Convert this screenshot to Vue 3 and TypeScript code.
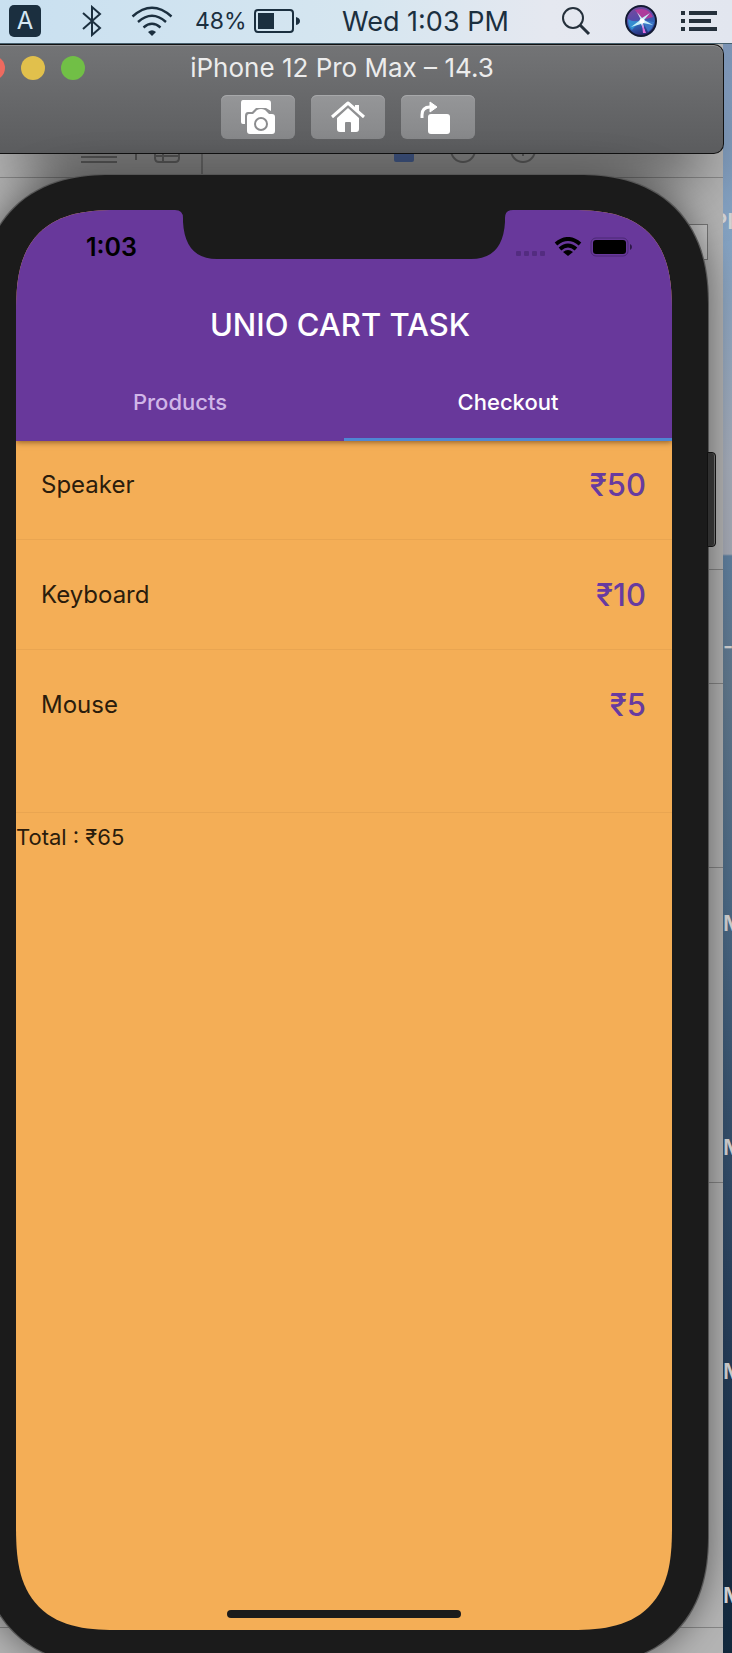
<script setup lang="ts">
import { ref } from 'vue'

interface CartItem {
  name: string
  price: number
}

const items: CartItem[] = [
  { name: 'Speaker', price: 50 },
  { name: 'Keyboard', price: 10 },
  { name: 'Mouse', price: 5 },
]
const total = items.reduce((sum, item) => sum + item.price, 0)
const tabs = ['Products', 'Checkout']
const active = ref('Checkout')
</script>

<template>
  <div class="desktop">
    <header class="menubar">
      <span class="input-source">A</span>
      <svg class="bluetooth" viewBox="0 0 20 32" width="20" height="32" aria-label="Bluetooth">
        <path d="M1 8 L18 23 L10 30 V2 L18 9 L1 24" fill="none" stroke="#1b2f3f" stroke-width="2" />
      </svg>
      <svg class="wifi" viewBox="0 0 42 30" width="42" height="30" aria-label="Wi-Fi">
        <g fill="none" stroke="#1b2f3f" stroke-width="2.4">
          <path d="M1.500 10.500 Q21 -7 40.500 10.500" />
          <path d="M7 16 Q21 3.500 35 16" />
          <path d="M12.500 21.500 Q21 14 29.500 21.500" />
        </g>
        <path d="M17 26 Q21 22.500 25 26 L21 30 Z" fill="#1b2f3f" />
      </svg>
      <span class="percent">48%</span>
      <svg class="battery" viewBox="0 0 46 24" width="46" height="24" aria-label="Battery">
        <rect x="1" y="1" width="38" height="22" rx="3" fill="none" stroke="#1b2f3f" stroke-width="2" />
        <rect x="4" y="4" width="16" height="16" fill="#1b2f3f" />
        <path d="M42 8 Q46 9 46 12 Q46 15 42 16 Z" fill="#1b2f3f" />
      </svg>
      <time class="clock">Wed 1:03 PM</time>
      <svg class="search" viewBox="0 0 30 30" width="30" height="30" aria-label="Search">
        <circle cx="12" cy="12" r="10" fill="none" stroke="#25303b" stroke-width="2" />
        <path d="M19 19 L28 28" stroke="#25303b" stroke-width="3" />
      </svg>
      <svg class="siri" viewBox="0 0 32 32" width="32" height="32" aria-label="Siri">
        <defs>
          <linearGradient id="orb" x1="0.2" y1="0" x2="0.5" y2="1">
            <stop offset="0" stop-color="#7a4b9c" />
            <stop offset="0.4" stop-color="#5a4aa8" />
            <stop offset="0.65" stop-color="#2f62b4" />
            <stop offset="1" stop-color="#2a2470" />
          </linearGradient>
        </defs>
        <circle cx="16" cy="16" r="15" fill="url(#orb)" stroke="#131a33" stroke-width="2" />
        <path d="M10 5 Q23 1 28 12 L17 15 Z" fill="#c0379a" opacity="0.8" />
        <path d="M3 14 Q9 18 16 15 L7 25 Q3 21 3 14Z" fill="#2f9ad8" opacity="0.8" />
        <path d="M17 15 L29 17 Q28 24 23 27 Z" fill="#3f7fd0" opacity="0.8" />
        <path d="M16 15 L12 7 L17 13 L25 8 L19 15 L28 20 L18 18 L20 28 L16 19 L6 22 L14 16 Z" fill="#c5eff8" />
        <path d="M17 18 L21 28 L18 28 Z" fill="#e06fe0" />
        <circle cx="17" cy="16" r="2.5" fill="#fff" />
      </svg>
      <svg class="list" viewBox="0 0 36 20" width="36" height="20" aria-label="Notification Center">
        <path d="M0 0h4v4H0z M8 0h28v4H8z M0 8h4v4H0z M8 8h22v4H8z M0 16h4v4H0z M8 16h28v4H8z" fill="#25303b" />
      </svg>
    </header>

    <main class="stage">
      <div class="wallpaper">
        <span class="file pr">PI</span>
        <span class="file dash">-</span>
        <span class="file m1">M</span>
        <span class="file m2">M</span>
        <span class="file m3">M</span>
        <span class="file m4">M</span>
      </div>
      <div class="back-window">
        <div class="back-bar">
          <svg viewBox="0 0 640 24" width="640" height="24">
            <g fill="none" stroke="#777" stroke-width="2">
              <path d="M81 3H117M81 8H117M136 0V6" />
              <path d="M155 0V4Q155 8 159 8H175Q179 8 179 4V0M163 0V8M155 2H179" />
              <path d="M202 0V24" stroke="#8c8c8c" />
              <circle cx="463" cy="-4" r="12" />
              <circle cx="523" cy="-4" r="12" />
              <path d="M523 -10V2" />
            </g>
            <path d="M394 0H414V6Q414 8 412 8H396Q394 8 394 6Z" fill="#5876b4" />
          </svg>
        </div>
        <i class="box" />
        <i class="rule r1" />
        <i class="rule r2" />
        <i class="rule r3" />
        <i class="rule r4" />
        <i class="rule r5" />
      </div>

      <section class="simulator">
        <div class="titlebar">
          <div class="title-row">
            <div class="lights">
              <button class="light red" aria-label="Close" />
              <button class="light yellow" aria-label="Minimize" />
              <button class="light green" aria-label="Zoom" />
            </div>
            <h1>iPhone 12 Pro Max – 14.3</h1>
          </div>
          <div class="tools">
            <button aria-label="Screenshot">
              <svg viewBox="0 0 36 36" width="36" height="36">
                <path d="M3 1H28Q31 1 31 4V12L26 9H16L12 13H8Q5 13 5 17V25H3Q1 25 1 23V4Q1 1 3 1Z" fill="#fff" />
                <path d="M9 15H13L17 11Q21 9 25 11L29 15H32Q35 15 35 18V32Q35 35 32 35H10Q7 35 7 32V18Q7 15 9 15Z" fill="#fff" />
                <circle cx="21" cy="25" r="6" fill="#fff" stroke="#8b8c8e" stroke-width="2" />
              </svg>
            </button>
            <button aria-label="Home">
              <svg viewBox="0 0 36 36" width="36" height="36">
                <path d="M2 18L18 4L34 18" fill="none" stroke="#fff" stroke-width="3" stroke-linejoin="round" />
                <path d="M25 6H29V13L25 9Z" fill="#fff" />
                <path d="M18 9L29 19V30Q29 33 26 33H21V24Q21 23 20 23H16Q15 23 15 24V33H10Q7 33 7 30V19Z" fill="#fff" />
              </svg>
            </button>
            <button aria-label="Rotate">
              <svg viewBox="0 0 36 36" width="36" height="36">
                <path d="M2 19V16Q2 8 10 8H12" fill="none" stroke="#fff" stroke-width="3" />
                <path d="M10 3L17 8L10 13Z" fill="#fff" stroke="#fff" stroke-linejoin="round" />
                <rect x="8" y="15" width="22" height="20" rx="3" fill="#fff" />
              </svg>
            </button>
          </div>
        </div>

        <div class="phone">
          <i class="side-key" />
          <div class="screen">
            <div class="app-top">
              <svg class="notch" viewBox="0 0 338 49" width="338" height="49">
                <path d="M0 0Q8 0 8 8V12Q10 49 42 49H296Q328 49 330 12V8Q330 0 338 0Z" fill="#1b1b1b" />
              </svg>
              <div class="status">
                <time>1:03</time>
                <div class="signals">
                  <svg viewBox="0 0 120 20" width="120" height="20" aria-label="Status">
                    <g fill="#532c80">
                      <rect x="2" y="14" width="5" height="5" rx="1" />
                      <rect x="10" y="14" width="5" height="5" rx="1" />
                      <rect x="18" y="14" width="5" height="5" rx="1" />
                      <rect x="26" y="14" width="5" height="5" rx="1" />
                    </g>
                    <g fill="none" stroke="#000" stroke-width="4">
                      <path d="M42 7Q54 -3 66 7" />
                      <path d="M46 12Q54 5 62 12" />
                    </g>
                    <path d="M49 15Q54 11 59 15L54 19Z" />
                    <rect x="77" y="1" width="37" height="18" rx="5" fill="none" stroke="#4b2875" stroke-width="1" />
                    <rect x="79" y="3" width="33" height="14" rx="3" />
                    <path d="M116 7Q118 8 118 10Q118 12 116 13Z" fill="#2e1849" />
                  </svg>
                </div>
              </div>
              <h2>UNIO CART TASK</h2>
              <nav class="tabs" role="tablist">
                <button
                  v-for="tab in tabs"
                  :key="tab"
                  role="tab"
                  :aria-selected="active === tab"
                  :class="{ on: active === tab }"
                  @click="active = tab"
                >
                  {{ tab }}
                </button>
              </nav>
            </div>
            <ul class="cart">
              <li v-for="item in items" :key="item.name">
                <span>{{ item.name }}</span>
                <strong>₹{{ item.price }}</strong>
              </li>
            </ul>
            <p class="total">Total : ₹{{ total }}</p>
            <i class="home-bar" />
          </div>
        </div>
      </section>
    </main>
  </div>
</template>

<style>
body {
  margin: 0;
}
</style>

<style scoped>
* {
  box-sizing: border-box;
}
.desktop {
  display: flex;
  flex-direction: column;
  min-height: 100vh;
  overflow: hidden;
  font-family: Inter, "Liberation Sans", sans-serif;
}
svg {
  display: block;
  flex: none;
}
button {
  border: 0;
  padding: 0;
  font: inherit;
}
.menubar {
  display: flex;
  align-items: center;
  height: 44px;
  padding: 0 15px 1px 9px;
  background: linear-gradient(90deg, #c9e0f0, #d6e6f0 50%, #e5e8f0 75%, #e2e6ef);
  border-bottom: 1px solid #47606e;
  color: #1b2f3f;
}
.input-source {
  width: 32px;
  height: 32px;
  border-radius: 5px;
  background: #1b2f3f;
  color: #d5e7f3;
  font-size: 24px;
  line-height: 32px;
  text-align: center;
}
.bluetooth {
  margin-left: 41px;
}
.wifi {
  margin-left: 29px;
}
.percent {
  width: 59px;
  margin-left: 22px;
  font-size: 23px;
  white-space: nowrap;
}
.clock {
  margin-left: 42px;
  font-size: 27px;
  white-space: nowrap;
}
.search {
  margin-left: auto;
}
.siri {
  margin-left: 34px;
}
.list {
  margin-left: 24px;
}
.stage {
  position: relative;
  display: flex;
  flex: 1;
}
.wallpaper,
.back-window {
  position: absolute;
  inset: 0;
  overflow: hidden;
}
.wallpaper {
  background: linear-gradient(#7b93b4, #86a4c4 200px, #a5acb9 420px, #a5a9b4 510px, #5f7f9e 512px, #61788d 640px, #4c6a86 860px, #38536f 1060px, #263e5a 1300px, #12283c 1609px);
}
.file {
  position: absolute;
  left: calc(100% - 9px);
  color: #d4d4d4;
  font-size: 22px;
  font-weight: 600;
  line-height: 24px;
}
.file.pr {
  top: 165px;
  left: calc(100% - 19px);
}
.dash { top: 590px; }
.m1 { top: 867px; }
.m2 { top: 1091px; }
.m3 { top: 1315px; }
.m4 { top: 1539px; }
.back-window {
  right: 9px;
  background: #b4b4b4;
}
.back-bar {
  height: 134px;
  padding-top: 110px;
  border-bottom: 1px solid #8a8a8a;
}
.box {
  position: absolute;
  top: 180px;
  right: 15px;
  width: 60px;
  height: 36px;
  border: 1px solid #777;
  background: #c8c8c8;
}
.rule {
  position: absolute;
  left: 0;
  right: 0;
  height: 1px;
  background: #858585;
}
.r1 { top: 525px; }
.r2 { top: 639px; }
.r3 { top: 823px; }
.r4 { top: 1138px; }
.r5 { top: 1583px; }
.simulator {
  position: relative;
  display: flex;
  flex: 1;
  flex-direction: column;
  min-width: 0;
}
.titlebar {
  position: relative;
  height: 110px;
  margin-right: 8px;
  padding-top: 8px;
  border: 1px solid #111;
  border-left: 0;
  border-radius: 0 10px 10px 0;
  background: linear-gradient(#737476, #5b5c5e);
  box-shadow: inset 0 1px #949597, 0 50px 60px -24px rgba(0, 0, 0, 0.5);
}
.title-row {
  position: relative;
  display: grid;
  grid-template-columns: 1fr auto 1fr;
  align-items: center;
  height: 30px;
  margin: 0 20px 0 -19px;
}
.lights {
  display: flex;
  gap: 16px;
}
.light {
  flex: none;
  width: 24px;
  height: 24px;
  border-radius: 50%;
}
.red { background: #ee6a5f; }
.yellow { background: #e1c04c; }
.green { background: #71bf46; }
h1 {
  margin: 0;
  color: #ececec;
  font-size: 26px;
  font-weight: 400;
  line-height: 30px;
  white-space: nowrap;
}
.tools {
  display: flex;
  justify-content: center;
  gap: 16px;
  margin: 12px 28px 0 0;
}
.tools button {
  display: grid;
  place-items: center;
  width: 74px;
  height: 44px;
  border-radius: 6px;
  background: linear-gradient(#959698, #87888a);
  box-shadow: inset 0 1px #a7a8aa;
}
.phone {
  position: relative;
  display: flex;
  flex: 1;
  margin: 21px 24px -12px -19px;
  padding: 35px 36px 35px 35px;
  border-radius: 114px;
  background: #1b1b1b;
  box-shadow: 0 0 0 1px #555, 0 0 36px rgba(0, 0, 0, 0.5);
}
.side-key {
  position: absolute;
  top: 277px;
  right: -8px;
  width: 9px;
  height: 95px;
  border: 1px solid #111;
  border-radius: 0 4px 4px 0;
  background: #303030;
  box-shadow: inset -1px 0 #666;
}
.screen {
  position: relative;
  display: flex;
  flex: 1;
  flex-direction: column;
  min-width: 0;
  overflow: hidden;
  border-radius: 84px;
  background: #f4ae56;
}
@supports (corner-shape: superellipse(1.5)) {
  .phone {
    border-radius: 130px;
    corner-shape: superellipse(1.23);
  }
  .screen {
    border-radius: 105px;
    corner-shape: superellipse(1.48);
  }
}
.app-top {
  position: relative;
  background: #68389b;
  box-shadow: 0 1px 6px rgba(60, 30, 0, 0.6);
}
.notch {
  position: absolute;
  top: 0;
  left: 50%;
  margin-left: -169px;
}
.status {
  display: flex;
  align-items: center;
  justify-content: space-between;
  padding: 22px 38px 0 70px;
}
.status time {
  font-size: 25px;
  font-weight: 600;
  line-height: 30px;
}
h2 {
  margin: 43px 0 0;
  padding-right: 8px;
  color: #fff;
  font-size: 31px;
  font-weight: 500;
  line-height: 40px;
  text-align: center;
}
.tabs {
  display: flex;
  margin-top: 20px;
}
.tabs button {
  flex: 1;
  height: 76px;
  border-bottom: 3px solid transparent;
  background: none;
  color: #d0b6e8;
  font-size: 22px;
  font-weight: 500;
}
.tabs .on {
  border-color: #4f86d3;
  color: #fff;
}
.cart {
  margin: 0;
  padding: 0 0 53px;
  border-bottom: 1px solid #e9a551;
  list-style: none;
}
.cart li {
  display: flex;
  align-items: center;
  justify-content: space-between;
  height: 110px;
  padding: 0 26px 0 25px;
  border-top: 1px solid #e9a551;
  color: #2a1c0c;
  font-size: 24px;
}
.cart li:first-child {
  height: 98px;
  padding-bottom: 11px;
  border: 0;
}
.cart strong {
  color: #673ba0;
  font-size: 31px;
  font-weight: 500;
}
.total {
  margin: 10px 0 0;
  color: #2a1c0c;
  font-size: 22px;
  line-height: 28px;
}
.home-bar {
  width: 234px;
  height: 8px;
  margin: auto auto 12px;
  border-radius: 4px;
  background: #1b1b1b;
}
</style>
